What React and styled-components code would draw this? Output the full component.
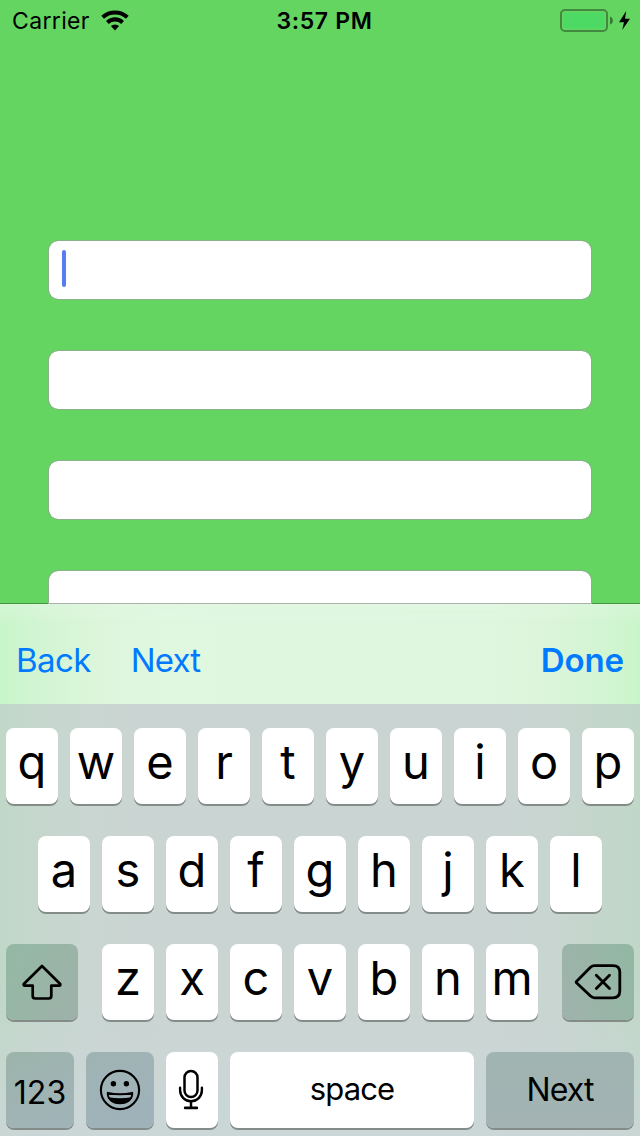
import React from 'react';
import styled, { createGlobalStyle } from 'styled-components';

const GlobalStyle = createGlobalStyle`
  * { box-sizing: border-box; }
  body { margin: 0; background: #64d561; }
  button { border: 0; padding: 0; margin: 0; background: none; font: inherit; color: inherit; }
`;

const Screen = styled.div`
  width: 640px;
  height: 1136px;
  overflow: hidden;
  display: flex;
  flex-direction: column;
  background: #64d561;
  color: #000;
  font-family: Inter, 'Liberation Sans', sans-serif;
`;

const StatusBar = styled.header`
  flex: 0 0 40px;
  display: grid;
  grid-template-columns: 1fr auto 1fr;
  align-items: center;
  padding: 0 8px 0 12px;
  font-size: 23px;
  line-height: 40px;
`;

const Carrier = styled.div`
  display: flex;
  align-items: center;
  gap: 11px;
  letter-spacing: 0.35px;
`;

const StatusText = styled.span`
  padding-top: 2px;
  line-height: 38px;
`;

const Clock = styled.time`
  font-weight: 600;
  letter-spacing: 0.65px;
  padding: 2px 0 0 5px;
  line-height: 38px;
`;

const Battery = styled.div`
  display: flex;
  justify-content: flex-end;
`;

const Form = styled.main`
  flex: 0 0 563px;
  overflow: hidden;
  display: flex;
  flex-direction: column;
  gap: 50px;
  padding: 200px 48px 0;
`;

const Field = styled.div`
  flex: 0 0 60px;
  display: flex;
  align-items: flex-start;
  padding: 9px 13px;
  border: 1px solid rgba(150, 165, 150, 0.75);
  border-radius: 10px;
  background: #fff;
  background-clip: padding-box;
`;

const Caret = styled.span`
  width: 4px;
  height: 37px;
  border-radius: 2px;
  background: #587df3;
`;

const Toolbar = styled.nav`
  flex: 0 0 101px;
  display: flex;
  align-items: center;
  gap: 40px;
  padding: 11px 16px 0;
  border-top: 1px solid #a9b3a9;
  border-image: linear-gradient(90deg, #439441 49px, #a9b3a9 49px, #a9b3a9 591px, #439441 591px) 1;
  background:
    linear-gradient(180deg, rgba(228, 247, 228, 0.4), rgba(224, 247, 224, 0) 20%),
    linear-gradient(90deg, #c9f5ca 0, #d3f5d3 45px, #dcf6dc 100px, #e0f7e0 160px, #dff6df 480px, #dbf5da 550px, #d3f5d3 600px, #caf5ca 640px);
`;

const BarButton = styled.button`
  color: #007aff;
  font-size: 33px;
  line-height: 40px;
  font-weight: ${({ $strong }) => ($strong ? 600 : 400)};
  letter-spacing: ${({ $track }) => $track || 0}px;
  margin-left: ${({ $end }) => ($end ? 'auto' : 0)};
`;

const Keyboard = styled.section`
  flex: 0 0 432px;
  display: flex;
  flex-direction: column;
  gap: 32px;
  padding: 24px 6px 0;
  background:
    linear-gradient(180deg, rgba(203, 214, 215, 0) 65%, rgba(203, 214, 215, 0.85) 100%),
    linear-gradient(90deg, #c0d8c7 0, #c5d7cd 35px, #cad6d2 90px, #cad5d3 180px, #cad5d3 500px, #c8d5d0 560px, #c3d6cb 605px, #c0d7c7 640px);
`;

const Row = styled.div`
  flex: 0 0 76px;
  display: flex;
  justify-content: ${({ $spread }) => ($spread ? 'space-between' : 'center')};
  gap: 12px;
`;

const Letters = styled.div`
  display: flex;
  gap: 12px;
`;

const tones = {
  light: '#fff',
  shift: 'linear-gradient(115deg, #95b8a4 15%, #9db2a9 85%)',
  erase: 'linear-gradient(70deg, #9eb3ab 15%, #94b7a4 85%)',
  numbers: 'linear-gradient(155deg, #9cb4ab, #a0b3b6 75%)',
  emoji: 'linear-gradient(155deg, #a0b3b3, #9fb2b9 75%)',
  next: 'linear-gradient(180deg, #a0b4b1, #a3b3b3)',
};

const Key = styled.button`
  width: ${({ $width }) => $width || 52}px;
  height: 76px;
  display: flex;
  align-items: center;
  justify-content: center;
  border-radius: 8px;
  background: ${({ $tone }) => tones[$tone || 'light']};
  box-shadow: 0 2px 0 #848c8a;
`;

const Letter = styled.span`
  font-size: 47px;
  font-weight: 380;
  line-height: 68px;
  padding-bottom: 8px;
`;

const Label = styled.span`
  font-size: ${({ $size }) => $size || 32}px;
  line-height: 40px;
  letter-spacing: ${({ $track }) => $track || 0}px;
  padding-top: ${({ $drop }) => $drop || 0}px;
  padding-bottom: ${({ $lift }) => $lift || 0}px;
`;

const WifiIcon = () => (
  <svg width="29" height="22" viewBox="0 0 29 22">
    <path d="M.3 6.8a20.2 20.2 0 0 1 27.4 0l-2.7 3a16.2 16.2 0 0 0-22 0Z" />
    <path d="M5 11.9a13.2 13.2 0 0 1 18 0l-2.8 3a9.2 9.2 0 0 0-12.4 0Z" />
    <path d="M9.9 17a6.2 6.2 0 0 1 8.2 0L14 21.4Z" />
  </svg>
);

const BatteryIcon = () => (
  <svg width="72" height="26" viewBox="0 0 72 26">
    <rect x="1" y="3" width="46" height="21" rx="4" fill="none" stroke="#41893f" strokeWidth="2" />
    <rect x="3.5" y="5.5" width="41" height="16" rx="2" fill="#4cd964" />
    <path d="M50 9.4c3.8 1.2 3.8 7 0 8.2Z" fill="#377a36" />
    <path d="M66.2 4 59 15.2h5L62.2 23 70 11.8h-5Z" />
  </svg>
);

const ShiftIcon = () => (
  <svg width="40" height="36" viewBox="0 0 40 36" fill="none" stroke="#000" strokeWidth="2.7" strokeLinejoin="round">
    <path d="M20 2 1.8 20q-.6 1.7 1.1 1.7H10.7V32q0 2.5 2.5 2.5h13.6q2.5 0 2.5-2.5V21.7h7.8q1.7 0 1.1-1.7Z" />
  </svg>
);

const EraseIcon = () => (
  <svg width="48" height="36" viewBox="0 0 48 36" fill="none" stroke="#000" strokeWidth="2.8" strokeLinejoin="round">
    <path d="M2.2 17.7 16.5 3.3Q18.3 1.6 20.5 1.6H38.9Q45.8 1.6 45.8 8.3V27Q45.8 33.8 38.9 33.8H20.5Q18.3 33.8 16.5 32.1L2.2 18.5Z" />
    <path d="m22.3 11.3 13.2 13.2M35.5 11.3 22.3 24.5" strokeLinecap="round" />
  </svg>
);

const EmojiIcon = () => (
  <svg width="42" height="42" viewBox="0 0 42 42">
    <circle cx="21" cy="21" r="19.1" fill="none" stroke="#000" strokeWidth="2.1" />
    <circle cx="14.4" cy="14.7" r="2.7" />
    <circle cx="27.4" cy="14.7" r="2.7" />
    <path d="M8.7 23.8Q21 26.8 33.3 23.8C33.4 30.5 28.5 34.3 21 34.3S8.6 30.5 8.7 23.8Z" fill="none" stroke="#000" strokeWidth="1.9" strokeLinejoin="round" />
    <path d="M9.6 28.2Q21 30.4 32.4 28.2Q29.5 34.8 21 34.8T9.6 28.2Z" />
  </svg>
);

const MicIcon = () => (
  <svg width="28" height="42" viewBox="0 0 28 42" fill="none" stroke="#000" strokeLinecap="round">
    <rect x="6.5" y="2" width="13" height="26" rx="6.5" strokeWidth="2.5" />
    <path d="M2.1 18.8V21.3a10.9 11 0 0 0 21.8 0V18.8" strokeWidth="2.4" />
    <path d="M13 32.5V38" strokeWidth="2.5" />
    <path d="M7.2 38.9H18.8" strokeWidth="2.8" />
  </svg>
);

const letterKeys = (text) =>
  text.split('').map((char) => (
    <Key key={char}>
      <Letter>{char}</Letter>
    </Key>
  ));

export default function App() {
  return (
    <>
      <GlobalStyle />
      <Screen>
        <StatusBar>
          <Carrier>
            <StatusText>Carrier</StatusText>
            <WifiIcon />
          </Carrier>
          <Clock>3:57 PM</Clock>
          <Battery>
            <BatteryIcon />
          </Battery>
        </StatusBar>
        <Form>
          <Field>
            <Caret />
          </Field>
          <Field />
          <Field />
          <Field />
        </Form>
        <Toolbar>
          <BarButton $track={-0.6}>Back</BarButton>
          <BarButton $track={-0.8}>Next</BarButton>
          <BarButton $strong $end $track={-0.1}>Done</BarButton>
        </Toolbar>
        <Keyboard>
          <Row>{letterKeys('qwertyuiop')}</Row>
          <Row>{letterKeys('asdfghjkl')}</Row>
          <Row $spread>
            <Key $width={72} $tone="shift" aria-label="Shift">
              <ShiftIcon />
            </Key>
            <Letters>{letterKeys('zxcvbnm')}</Letters>
            <Key $width={72} $tone="erase" aria-label="Delete">
              <EraseIcon />
            </Key>
          </Row>
          <Row>
            <Key $width={68} $tone="numbers">
              <Label $drop={5}>123</Label>
            </Key>
            <Key $width={68} $tone="emoji" aria-label="Emoji">
              <EmojiIcon />
            </Key>
            <Key aria-label="Dictate">
              <MicIcon />
            </Key>
            <Key $width={244}>
              <Label $size={31} $track={-0.85} $lift={2}>space</Label>
            </Key>
            <Key $width={148} $tone="next">
              <Label $track={-0.9}>Next</Label>
            </Key>
          </Row>
        </Keyboard>
      </Screen>
    </>
  );
}
